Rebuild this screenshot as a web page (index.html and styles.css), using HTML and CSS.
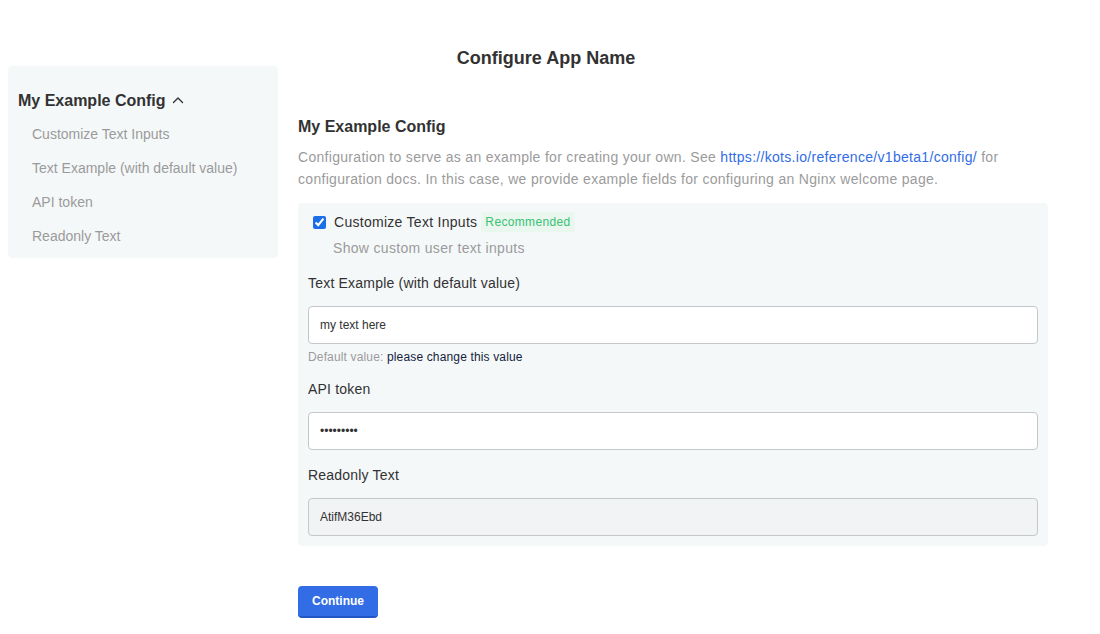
FILE: index.html
```html
<!DOCTYPE html>
<html lang="en">
<head>
<meta charset="utf-8">
<title>Configure App Name</title>
<link rel="stylesheet" href="styles.css">
</head>
<body>
  <h1 class="page-title">Configure App Name</h1>
  <div class="layout">
    <aside class="sidebar">
      <div class="sidebar-heading">
        <span>My Example Config</span>
        <svg class="chevron" width="12" height="8" viewBox="0 0 12 8" aria-hidden="true">
          <path d="M1.5 6.5 L6 2 L10.5 6.5" fill="none" stroke="#323232" stroke-width="1.4" stroke-linecap="round" stroke-linejoin="round"/>
        </svg>
      </div>
      <ul class="sidebar-items">
        <li>Customize Text Inputs</li>
        <li>Text Example (with default value)</li>
        <li>API token</li>
        <li>Readonly Text</li>
      </ul>
    </aside>
    <main class="main">
      <h2 class="group-title">My Example Config</h2>
      <p class="group-desc">Configuration to serve as an example for creating your own. See <a href="#" class="link">https://kots.io/reference/v1beta1/config/</a> for configuration docs. In this case, we provide example fields for configuring an Nginx welcome page.</p>
      <div class="group-box">
        <div class="check-field">
          <div class="check-row">
            <input type="checkbox" class="checkbox" checked>
            <span class="check-label">Customize Text Inputs</span>
            <span class="badge">Recommended</span>
          </div>
          <div class="check-help">Show custom user text inputs</div>
        </div>
        <div class="field">
          <div class="field-label">Text Example (with default value)</div>
          <input type="text" class="text-input" value="my text here">
          <div class="default-value">Default value: <span class="default-strong">please change this value</span></div>
        </div>
        <div class="field">
          <div class="field-label">API token</div>
          <input type="password" class="text-input" value="secretkey">
        </div>
        <div class="field">
          <div class="field-label">Readonly Text</div>
          <input type="text" class="text-input readonly" value="AtifM36Ebd" readonly>
        </div>
      </div>
      <button class="btn-primary" type="button">Continue</button>
    </main>
  </div>
</body>
</html>
```

FILE: styles.css
```css
* { box-sizing: border-box; }

html, body {
  margin: 0;
  padding: 0;
  background: #ffffff;
}

body {
  font-family: "Liberation Sans", Arial, Helvetica, sans-serif;
  color: #323232;
}

.page-title {
  margin: 50px 0 0;
  padding: 0 16px 0 8px;
  font-size: 18px;
  font-weight: 700;
  line-height: 16px;
  text-align: center;
  color: #323232;
}

.layout {
  display: flex;
  align-items: flex-start;
  gap: 20px;
  padding-left: 8px;
}

.sidebar {
  width: 270px;
  flex: none;
  background: #f5f8f9;
  border-radius: 4px;
  padding: 24px 10px 5px;
}

.sidebar-heading {
  display: flex;
  align-items: center;
  gap: 6px;
  font-size: 16px;
  font-weight: 700;
  line-height: 22px;
  color: #323232;
}

.chevron {
  display: block;
  margin-top: -2px;
}

.sidebar-items {
  list-style: none;
  margin: 5px 0 0;
  padding: 0 0 0 14px;
}

.sidebar-items li {
  font-size: 14px;
  line-height: 34px;
  height: 34px;
  color: #9b9b9b;
}

.main {
  width: 750px;
  flex: none;
  padding-top: 50px;
}

.group-title {
  margin: 0;
  font-size: 16px;
  font-weight: 700;
  line-height: 22px;
  color: #323232;
}

.group-desc {
  margin: 8px 0 0;
  font-size: 14px;
  line-height: 22px;
  letter-spacing: 0.3px;
  color: #9b9b9b;
}

.link {
  color: #326de6;
  text-decoration: none;
}

.group-box {
  margin-top: 13px;
  background: #f5f8f9;
  border-radius: 4px;
  padding: 9px 10px 10px 10px;
}

.check-row {
  display: flex;
  align-items: center;
  height: 20px;
}

.checkbox {
  width: 13px;
  height: 13px;
  margin: 0 8px 0 5px;
  accent-color: #1a6fe8;
}

.check-label {
  font-size: 14px;
  line-height: 20px;
  letter-spacing: 0.28px;
  color: #323232;
}

.badge {
  margin-left: 4px;
  padding: 0 4px;
  height: 20px;
  line-height: 20px;
  font-size: 12px;
  letter-spacing: 0.35px;
  color: #38c172;
  background: #e9f7ef;
  border-radius: 2px;
}

.check-help {
  margin-top: 6px;
  padding-left: 25px;
  font-size: 14px;
  line-height: 20px;
  letter-spacing: 0.32px;
  color: #9b9b9b;
}

.field {
  margin-top: 15px;
}

.field-label {
  font-size: 14px;
  line-height: 20px;
  letter-spacing: 0.2px;
  color: #323232;
  margin-bottom: 13px;
}

.text-input {
  display: block;
  width: 100%;
  height: 38px;
  padding: 0 11px;
  font-family: "Liberation Sans", Arial, Helvetica, sans-serif;
  font-size: 12px;
  color: #323232;
  background: #ffffff;
  border: 1px solid #c4c8ca;
  border-radius: 4px;
  outline: none;
}

.text-input.readonly {
  background: #f2f3f5;
}

.default-value {
  margin-top: 7px;
  font-size: 12px;
  line-height: 13px;
  letter-spacing: 0.15px;
  color: #9b9b9b;
}

.default-strong {
  color: #141d3d;
}

.btn-primary {
  display: block;
  margin-top: 40px;
  height: 32px;
  padding: 0 14px;
  font-family: "Liberation Sans", Arial, Helvetica, sans-serif;
  font-size: 12px;
  font-weight: 700;
  color: #ffffff;
  background: #326de6;
  border: none;
  border-bottom: 2px solid #2256c4;
  border-radius: 4px;
  cursor: pointer;
}
```
